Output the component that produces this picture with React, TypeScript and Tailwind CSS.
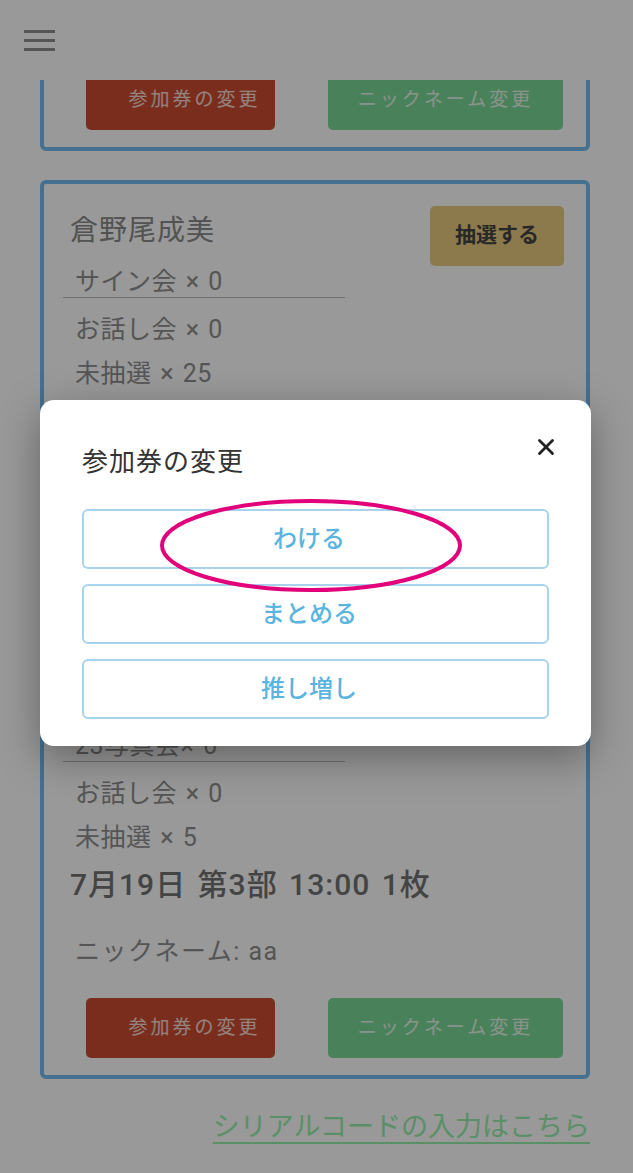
import { X } from 'lucide-react';

type Ticket = {
  name: string;
  first: string;
  talk: number;
  pending: number;
  date: string;
  nickname: string;
};

const tickets: Ticket[] = [
  { name: '倉野尾成美', first: 'サイン会 × 0', talk: 0, pending: 3, date: '7月19日 第2部 11:00 1枚', nickname: 'aa' },
  { name: '倉野尾成美', first: 'サイン会 × 0', talk: 0, pending: 25, date: '7月19日 第1部 10:00 1枚', nickname: 'aa' },
  { name: '倉野尾成美', first: '23写真会× 0', talk: 0, pending: 5, date: '7月19日 第3部 13:00 1枚', nickname: 'aa' },
];

function TicketCard({ t }: { t: Ticket }) {
  return (
    <div className="rounded-[6px] border-4 border-[#73bbf0] pl-[26px] pr-[22px] pt-[22px] pb-[17px]">
      <div className="flex items-start justify-between h-[60px]">
        <div className="text-[28px] leading-[50px] tracking-[1px] text-[#8a8a8a]">{t.name}</div>
        <button className="h-[60px] w-[134px] rounded-[5px] bg-[#e9cb7f] text-[21px] font-bold text-[#444]">
          抽選する
        </button>
      </div>
      <div className="-ml-[7px] w-[282px] border-b border-[#b8b8b8] pl-[12px] text-[25px] leading-[31px] tracking-[0.5px] [word-spacing:2px] text-[#8e8e8e]">
        {t.first}
      </div>
      <div className="mt-[10px] pl-[5px] text-[25px] leading-[44px] tracking-[0.5px] [word-spacing:2px] text-[#8e8e8e]">
        <div>お話し会 × {t.talk}</div>
        <div>未抽選 × {t.pending}</div>
      </div>
      <div className="text-[30px] leading-[50px] tracking-[1px] [word-spacing:3px] font-medium text-[#727272]">
        {t.date}
      </div>
      <div className="mt-[20px] pl-[5px] text-[25px] leading-[44px] tracking-[1.5px] text-[#8e8e8e]">
        ニックネーム: {t.nickname}
      </div>
      <div className="mt-[24px] flex gap-[53px] pl-[16px]">
        <button className="h-[60px] w-[189px] rounded-[5px] bg-[#cb4b2f] pl-[28px] text-[19px] tracking-[3px] text-white/80">
          参加券の変更
        </button>
        <button className="h-[60px] w-[235px] rounded-[5px] bg-[#7bd896] text-[19px] tracking-[3px] text-white/80">
          ニックネーム変更
        </button>
      </div>
    </div>
  );
}

export default function App() {
  const options = ['わける', 'まとめる', '推し増し'];

  return (
    <div
      className="relative h-[1173px] w-[633px] overflow-hidden bg-white"
      style={{ fontFamily: 'Roboto, "Noto Sans CJK JP", sans-serif' }}
    >
      <header className="relative z-10 flex h-[80px] items-start bg-white pl-[24px] pt-[30px]">
        <div className="flex w-[31px] flex-col gap-[6px]">
          <span className="h-[3px] bg-[#8e8e8e]" />
          <span className="h-[3px] bg-[#8e8e8e]" />
          <span className="h-[3px] bg-[#8e8e8e]" />
        </div>
      </header>

      <main className="h-[1093px] overflow-hidden">
        <div className="-mt-[364px] flex flex-col gap-[29px] pl-[40px] pr-[43px]">
          {tickets.map((t, i) => (
            <TicketCard key={i} t={t} />
          ))}
        </div>
        <div className="mt-[28px] pr-[43px] text-right">
          <a className="text-[27px] leading-[40px] text-[#96eeac] underline underline-offset-[6px]">
            シリアルコードの入力はこちら
          </a>
        </div>
      </main>

      {/* backdrop */}
      <div className="absolute inset-0 z-20 bg-black/40" />

      {/* modal */}
      <div className="absolute left-[40px] top-[400px] z-30 w-[551px] rounded-[14px] bg-white px-[42px] pt-[44px] pb-[27px] shadow-[0_12px_40px_rgba(0,0,0,0.35)]">
        <button className="absolute right-[32px] top-[34px] text-[#222]">
          <X className="h-[26px] w-[26px]" strokeWidth={2.6} />
        </button>
        <h2 className="text-[26px] leading-[36px] tracking-[1px] text-[#333]">参加券の変更</h2>
        <div className="mt-[29px] flex flex-col gap-[15px]">
          {options.map((o) => (
            <button
              key={o}
              className="h-[60px] w-full rounded-[6px] border-2 border-[#a9d2ec] pr-[13px] text-[24px] font-medium text-[#5ab4e0]"
            >
              {o}
            </button>
          ))}
        </div>
        {/* annotation ring */}
        <svg className="pointer-events-none absolute left-[118px] top-[98px]" width="306" height="95" viewBox="0 0 306 95">
          <ellipse cx="153" cy="47.5" rx="149" ry="44.5" fill="none" stroke="#e2007a" strokeWidth="4" />
        </svg>
      </div>
    </div>
  );
}
